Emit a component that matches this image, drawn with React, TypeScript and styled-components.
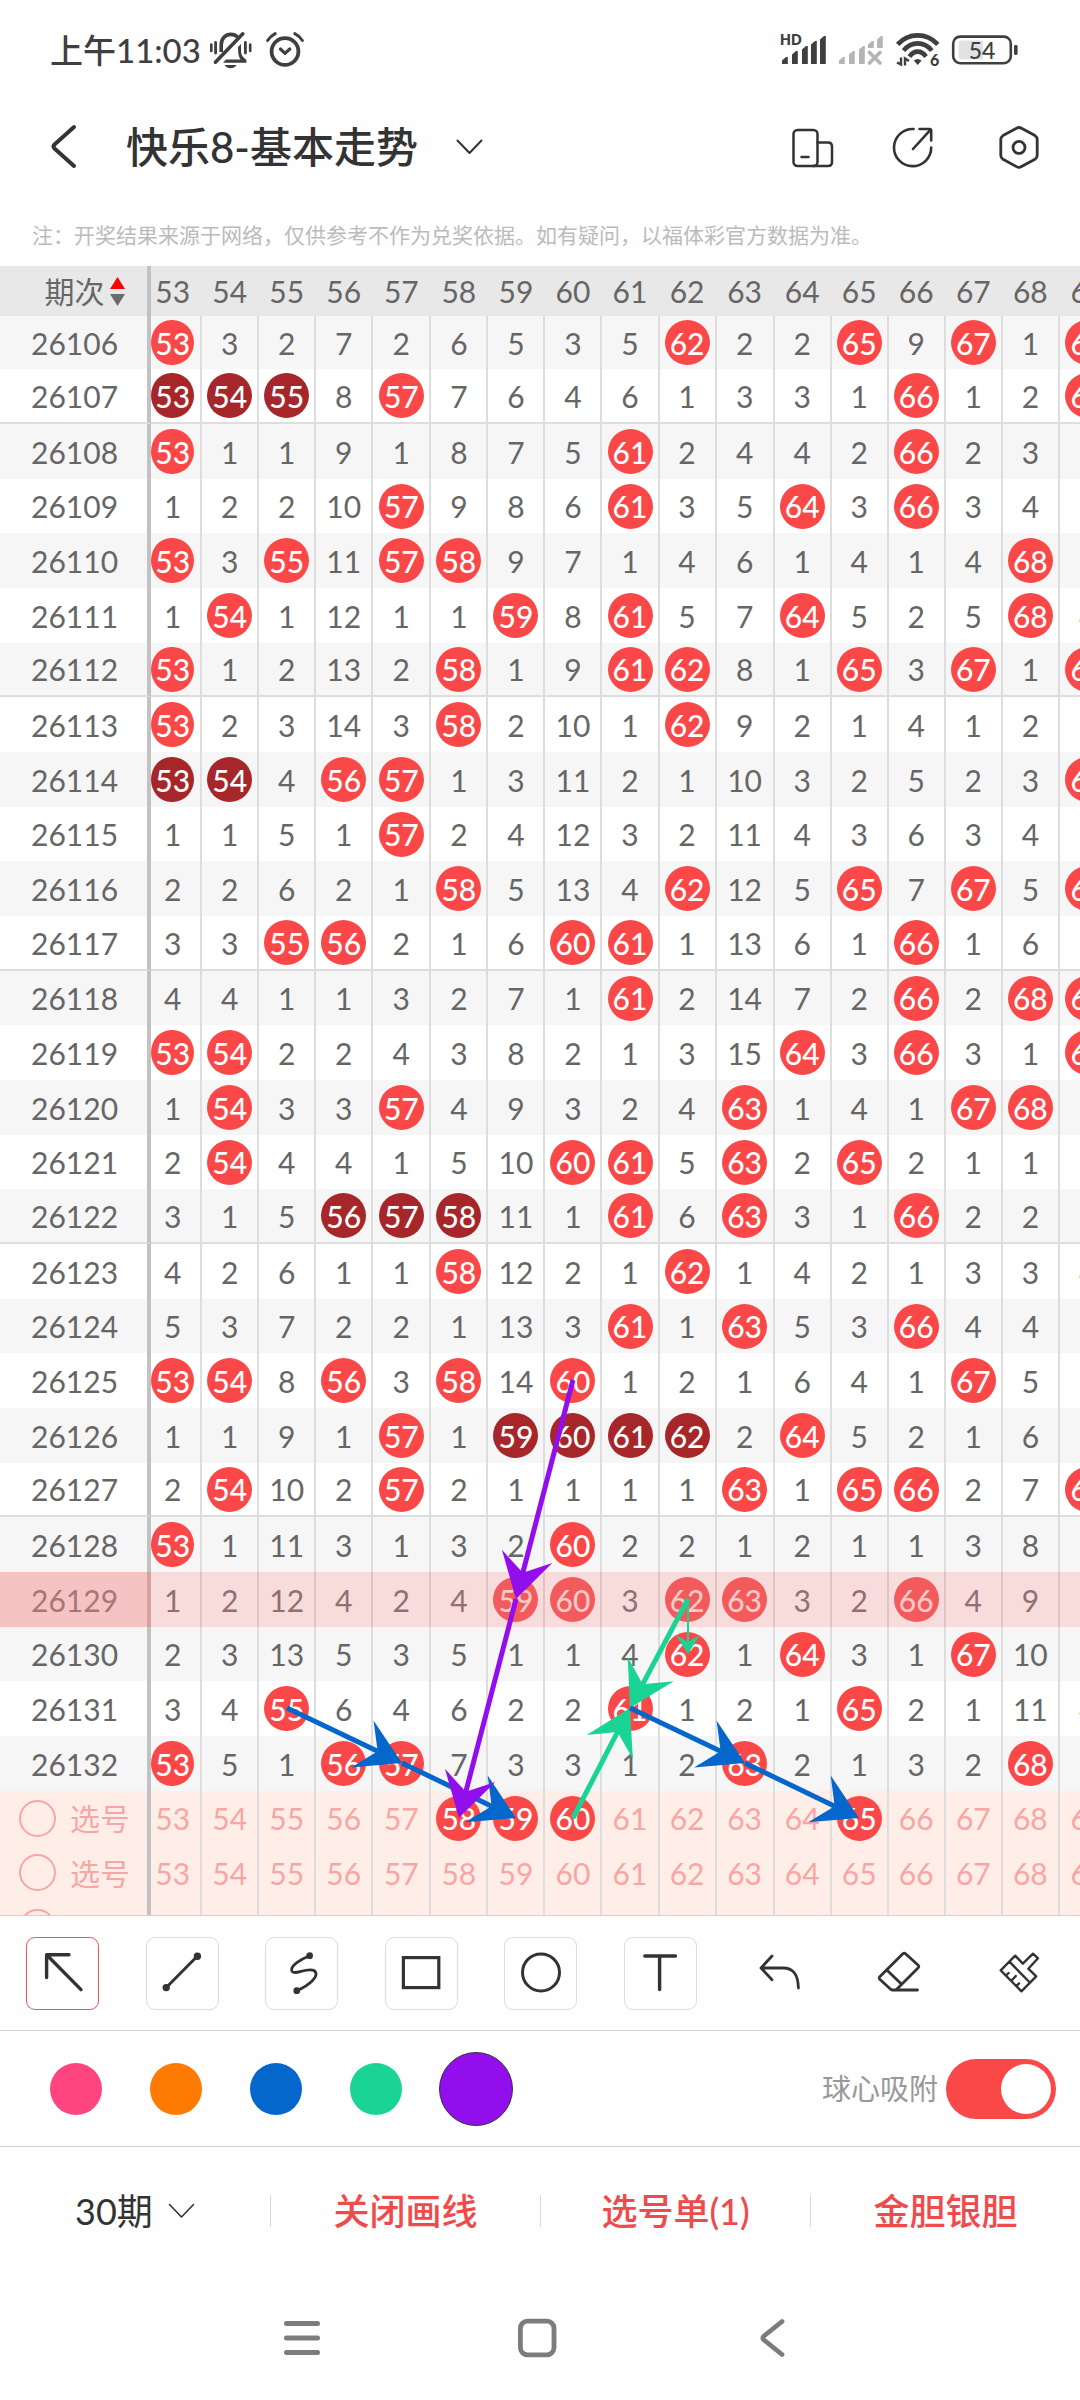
import React, { useState } from 'react';
import styled, { createGlobalStyle, css } from 'styled-components';

const FONT = `Lato, "Noto Sans CJK SC", "Noto Sans", sans-serif`;

const GlobalStyle = createGlobalStyle`
  *, *::before, *::after { box-sizing: border-box; }
  body { margin: 0; background: #fefefe; color: #333; font-family: ${FONT}; }
  button, select, input { font: inherit; color: inherit; margin: 0; padding: 0; border: 0; background: none; }
  button { cursor: pointer; }
  svg { display: block; flex: none; overflow: visible; }
`;

/* ---------- chart data ---------- */

const FIRST = 53;
const COLUMNS = Array.from({ length: 17 }, (_, i) => FIRST + i);

type Draw = { period: number; hits: number[]; streak?: number[] };

const DRAWS: Draw[] = [
  { period: 26106, hits: [53, 62, 65, 67, 69] },
  { period: 26107, hits: [53, 54, 55, 57, 66, 69], streak: [53, 54, 55] },
  { period: 26108, hits: [53, 61, 66] },
  { period: 26109, hits: [57, 61, 64, 66] },
  { period: 26110, hits: [53, 55, 57, 58, 68] },
  { period: 26111, hits: [54, 59, 61, 64, 68] },
  { period: 26112, hits: [53, 58, 61, 62, 65, 67, 69] },
  { period: 26113, hits: [53, 58, 62] },
  { period: 26114, hits: [53, 54, 56, 57, 69], streak: [53, 54] },
  { period: 26115, hits: [57] },
  { period: 26116, hits: [58, 62, 65, 67, 69] },
  { period: 26117, hits: [55, 56, 60, 61, 66] },
  { period: 26118, hits: [61, 66, 68, 69] },
  { period: 26119, hits: [53, 54, 64, 66, 69] },
  { period: 26120, hits: [54, 57, 63, 67, 68] },
  { period: 26121, hits: [54, 60, 61, 63, 65] },
  { period: 26122, hits: [56, 57, 58, 61, 63, 66], streak: [56, 57, 58] },
  { period: 26123, hits: [58, 62] },
  { period: 26124, hits: [61, 63, 66] },
  { period: 26125, hits: [53, 54, 56, 58, 60, 67] },
  { period: 26126, hits: [57, 59, 60, 61, 62, 64], streak: [59, 60, 61, 62] },
  { period: 26127, hits: [54, 57, 63, 65, 66, 69] },
  { period: 26128, hits: [53, 60] },
  { period: 26129, hits: [59, 60, 62, 63, 66] },
  { period: 26130, hits: [62, 64, 67] },
  { period: 26131, hits: [55, 61, 65] },
  { period: 26132, hits: [53, 56, 57, 63, 68] },
];

const SELECTED_PERIOD = 26129;

/* Misses already accumulated before the first listed draw. */
const CARRIED = [0, 2, 1, 6, 1, 5, 4, 2, 4, 0, 1, 1, 0, 8, 0, 0, 0];

const MISSES: number[][] = (() => {
  const running = [...CARRIED];
  return DRAWS.map((draw) =>
    COLUMNS.map((n, i) => {
      running[i] = draw.hits.includes(n) ? 0 : running[i] + 1;
      return running[i];
    }),
  );
})();

/* ---------- chart geometry shared by the table and the line layer ---------- */

const HEAD_H = 50;
const FIRST_ROW_H = 53;
const TICKET = DRAWS.length;

const colX = (n: number) => 173 + Math.round(((n - FIRST) * 343) / 6);
const rowY = (i: number) =>
  HEAD_H + FIRST_ROW_H + 55 * (i - 1) - Math.floor((i - 1) / 3) + 27;
const periodRow = (p: number) => p - DRAWS[0].period;

const GREEN = '#19d494';
const BLUE = '#0566cb';
const PURPLE = '#920eec';

type Line = { color: string; from: [number, number]; to: [number, number]; thin?: boolean };

const LINES: Line[] = [
  { color: GREEN, from: [62, periodRow(26129)], to: [62, periodRow(26130)], thin: true },
  { color: GREEN, from: [62, periodRow(26129)], to: [61, periodRow(26131)] },
  { color: GREEN, from: [60, TICKET], to: [61, periodRow(26131)] },
  { color: BLUE, from: [61, periodRow(26131)], to: [63, periodRow(26132)] },
  { color: BLUE, from: [63, periodRow(26132)], to: [65, TICKET] },
  { color: BLUE, from: [55, periodRow(26131)], to: [57, periodRow(26132)] },
  { color: BLUE, from: [57, periodRow(26132)], to: [59, TICKET] },
  { color: PURPLE, from: [60, periodRow(26125)], to: [59, periodRow(26129)] },
  { color: PURPLE, from: [59, periodRow(26129)], to: [58, TICKET] },
];

/* ---------- layout ---------- */

const Page = styled.div`
  display: flex;
  flex-direction: column;
  height: 100vh;
  overflow: hidden;
`;

const StatusBar = styled.div`
  flex: none;
  display: flex;
  align-items: center;
  justify-content: space-between;
  height: 98px;
  padding: 2px 62px 0 50px;
  color: #3f3f3f;
`;

const StatusGroup = styled.div<{ $gap: number }>`
  display: flex;
  align-items: center;
  gap: ${(p) => p.$gap}px;
`;

const Clock = styled.time`
  font-size: 33px;
  line-height: 40px;
  font-weight: 500;
  margin-right: -4px;
`;

const Header = styled.header`
  flex: none;
  display: flex;
  align-items: center;
  height: 98px;
  padding: 0 37px 0 40px;
`;

const IconButton = styled.button`
  display: flex;
`;

const Title = styled.h1`
  flex: 1;
  margin: 0 0 0 38px;
  font-size: 42px;
  line-height: 56px;
  font-weight: 500;
`;

const TitleButton = styled.button`
  display: flex;
  align-items: center;
  gap: 38px;
`;

const HeaderActions = styled.div`
  display: flex;
  gap: 54px;
`;

const Notice = styled.p`
  flex: none;
  margin: 0;
  height: 70px;
  padding: 23px 32px 0;
  font-size: 21px;
  line-height: 32px;
  color: #bbb;
  white-space: nowrap;
`;

const ChartViewport = styled.main`
  position: relative;
  flex: 1;
  min-height: 0;
  overflow: hidden;
`;

const ChartTable = styled.table`
  table-layout: fixed;
  width: 1118px;
  border-collapse: separate;
  border-spacing: 0;
  font-size: 30px;
  line-height: 36px;
  color: #666;
`;

const Col = styled.col<{ $w: number }>`
  width: ${(p) => p.$w}px;
`;

const headCell = css`
  height: ${HEAD_H}px;
  padding: 0;
  background: #e8e8e8;
  font-weight: 400;
  text-align: center;
`;

const HeadPeriod = styled.th`
  ${headCell}
  border-right: 4px solid #c2c2c2;
`;

const HeadNumber = styled.th`
  ${headCell}
  border-right: 2px solid #e8e8e8;
  &:nth-child(2) { padding-right: 6px; }
`;

const SortButton = styled.button`
  display: flex;
  align-items: center;
  justify-content: center;
  gap: 5px;
  width: 100%;
  padding-left: 22px;
`;

const PeriodCell = styled.th`
  padding: 0 0 0 2px;
  font-weight: 400;
  text-align: center;
  border-right: 4px solid #c2c2c2;
`;

const NumberCell = styled.td`
  padding: 0;
  text-align: center;
  border-right: 2px solid #ddd;
  &:nth-child(2) { padding-right: 6px; }
`;

const Ball = styled.span<{ $dark?: boolean }>`
  display: flex;
  align-items: center;
  justify-content: center;
  width: 45px;
  height: 45px;
  margin: 0 auto;
  border-radius: 50%;
  font-weight: 500;
  color: #fff;
  background: ${(p) => (p.$dark ? '#a62629' : '#fa4848')};
  ${NumberCell}:nth-child(2) & { width: 43px; border-radius: 20px 50% 50% 20px / 50%; }
`;

const rowHeights = css`
  height: 55px;
  &:nth-child(3n + 1) { height: 54px; }
  &:first-child { height: ${FIRST_ROW_H}px; }
`;

const DrawRow = styled.tr<{ $ruled: boolean; $selected: boolean }>`
  ${rowHeights}
  background: #fff;
  &:nth-child(odd) { background: #f6f6f6; }

  ${(p) => p.$ruled && css`
    > * { border-bottom: 2px solid #ddd; }
  `}

  ${(p) => p.$selected && css`
    && { background: #f8dbdb; }
    ${PeriodCell} { background: #f5c3c3; color: #a87677; border-right-color: #d9a2a2; }
    ${NumberCell} { color: #907072; border-right-color: #dfc3c3; }
    ${Ball} { background: #f35a5b; color: #fcc9c9; }
  `}
`;

const TicketRow = styled.tr`
  ${rowHeights}
  background: #feeee7;
  color: #f8a6a5;
`;

const TicketLabel = styled.label`
  display: flex;
  align-items: center;
  gap: 14px;
  padding-left: 17px;
`;

const TicketCheck = styled.input`
  appearance: none;
  width: 37px;
  height: 37px;
  border: 2px solid #f8a6a5;
  border-radius: 50%;
`;

const NumberButton = styled.button`
  display: block;
  width: 100%;
`;

const LineLayer = styled.svg`
  position: absolute;
  top: 0;
  left: 0;
  width: 100%;
  height: 100%;
  pointer-events: none;
`;

const Toolbar = styled.div`
  flex: none;
  display: flex;
  align-items: center;
  justify-content: space-between;
  height: 115px;
  padding: 0 25px 0 26px;
  border-top: 1px solid #d2d2d2;
`;

const ToolButton = styled.button<{ $framed?: boolean; $active?: boolean }>`
  display: flex;
  align-items: center;
  justify-content: center;
  width: 73px;
  height: 73px;
  border-radius: 9px;
  border: 1px solid ${(p) => (p.$active ? '#e4585a' : p.$framed ? '#dcdcdc' : 'transparent')};
`;

const Palette = styled.div`
  flex: none;
  display: flex;
  align-items: center;
  justify-content: space-between;
  height: 116px;
  padding: 0 24px 0 26px;
  border-top: 1px solid #d2d2d2;
`;

const Swatches = styled.div`
  display: flex;
`;

const SwatchSlot = styled.div`
  display: flex;
  align-items: center;
  justify-content: center;
  width: 100px;
  height: 74px;
`;

const Swatch = styled.button<{ $color: string; $active: boolean }>`
  width: ${(p) => (p.$active ? 74 : 52)}px;
  height: ${(p) => (p.$active ? 74 : 52)}px;
  border-radius: 50%;
  background: ${(p) => p.$color};
  border: ${(p) => (p.$active ? '1px solid #333' : '0')};
`;

const SnapLabel = styled.label`
  display: flex;
  align-items: center;
  gap: 8px;
  font-size: 29px;
  line-height: 36px;
  color: #999;
`;

const Switch = styled.input`
  appearance: none;
  display: flex;
  align-items: center;
  width: 110px;
  height: 60px;
  padding: 0 5px;
  border-radius: 30px;
  background: #ccc;
  cursor: pointer;
  &::before {
    content: '';
    width: 50px;
    height: 50px;
    border-radius: 50%;
    background: #fff;
  }
  &:checked { background: #fa4848; justify-content: flex-end; }
`;

const Footer = styled.div`
  flex: none;
  display: grid;
  grid-template-columns: repeat(4, 1fr);
  align-items: center;
  height: 128px;
  border-top: 1px solid #d2d2d2;
  font-size: 36px;
  line-height: 48px;
`;

const FooterCell = styled.div`
  display: flex;
  align-items: center;
  justify-content: center;
  gap: 15px;
  height: 32px;
  & + & { border-left: 1px solid #d8d8d8; }
`;

const PeriodSelect = styled.select`
  appearance: none;
  cursor: pointer;
`;

const FooterButton = styled.button`
  color: #f04a4b;
  font-weight: 500;
`;

const NavBar = styled.nav`
  flex: none;
  display: flex;
  align-items: center;
  justify-content: center;
  gap: 187px;
  height: 126px;
  padding: 2px 6px 0 0;
  color: #7c7c7c;
`;

/* ---------- icons ---------- */

const Icon = ({ w = 3, children }: { w?: number; children: React.ReactNode }) => (
  <svg width="48" height="48" viewBox="0 0 48 48" fill="none" stroke="currentColor" strokeWidth={w} strokeLinecap="round" strokeLinejoin="round" aria-hidden="true">
    {children}
  </svg>
);

const Chevron = ({ w }: { w: number }) => (
  <svg width="27" height="16" viewBox="0 0 27 16" fill="none" stroke="currentColor" strokeWidth={w} strokeLinecap="round" strokeLinejoin="round" aria-hidden="true">
    <path d="M1.5 1.5L13.5 14L25.5 1.5" />
  </svg>
);

const MutedBell = () => (
  <svg width="44" height="38" viewBox="0 0 44 38" fill="none" stroke="currentColor" strokeWidth="3.6" aria-hidden="true">
    <path d="M2.3 13.5V20M41.2 13.5V20" strokeWidth="2.6" strokeLinecap="round" />
    <path d="M6.6 11.5V22M36.4 11.5V22" strokeWidth="2.8" strokeLinecap="round" />
    <path d="M12.2 21V14C12.2 7.5 16.5 3.4 21.8 3.4C24.3 3.4 26.8 4.3 28.5 6" />
    <path d="M6.4 31.2L33.8 2.8" strokeLinecap="round" />
    <path d="M32 13V19.5C32 23 33 25.5 37.4 29V31.8H14L17 28.5H31.5C29.5 26 29 22 29 16Z" fill="currentColor" stroke="none" />
    <path d="M15.5 34H27.6C26.5 36 24.5 37.2 21.6 37.2C18.6 37.2 16.6 36 15.5 34Z" fill="currentColor" stroke="none" />
  </svg>
);

const Alarm = () => (
  <svg width="40" height="38" viewBox="0 0 40 38" fill="none" stroke="currentColor" strokeWidth="3.8" strokeLinecap="round" aria-hidden="true">
    <circle cx="20" cy="20.5" r="13.4" />
    <path d="M15.4 18L20 22.4L24.8 18" strokeLinejoin="round" strokeWidth="3.2" />
    <path d="M2.6 9.5Q5.5 5 10.2 2.6M37.4 9.5Q34.5 5 29.8 2.6" strokeWidth="3" />
  </svg>
);

const SIGNAL_BARS = [
  [3, 24],
  [13, 18],
  [23, 13],
  [32, 8],
  [41, 3],
];

const barPath = (x: number, y: number, bottom: number) =>
  `M${x} ${y + 3.5}L${x + 4} ${y}H${x + 5.8}V${bottom}H${x}Z`;

const SignalHD = () => (
  <svg width="48" height="34" viewBox="0 0 48 34" fill="currentColor" aria-hidden="true">
    {SIGNAL_BARS.map(([x, y]) => <path key={x} d={barPath(x, y, 31)} />)}
    <text x="1" y="12" fontSize="14" fontWeight="800">HD</text>
  </svg>
);

const SignalOff = () => (
  <svg width="46" height="34" viewBox="2 0 46 34" fill="#b5b5b5" aria-hidden="true">
    {SIGNAL_BARS.map(([x, y], i) => <path key={x} d={barPath(x, y, i < 3 ? 31 : 15)} />)}
    <path d="M33.5 19.5L44 30M44 19.5L33.5 30" stroke="#b5b5b5" strokeWidth="3.6" strokeLinecap="round" />
  </svg>
);

const Wifi = () => (
  <svg width="46" height="36" viewBox="0 0 46 36" fill="none" stroke="currentColor" strokeWidth="4.6" aria-hidden="true">
    <path d="M2.6 12.4Q11 3.4 22.7 3.4T42.8 12.4" />
    <path d="M8.6 18.6Q14.6 11.4 22.7 11.4T36.8 18.6" />
    <path d="M14.4 24.6Q18 19.6 22.7 19.6T31 24.6" />
    <path d="M18.8 28.4Q22.7 25.4 26.6 28.4L22.7 33Z" fill="currentColor" stroke="none" />
    <path d="M2 30.5L6 32.5V25.5M10 33.5V26.5L14 29" strokeWidth="2.4" />
    <text x="35" y="34" fontSize="16" fontWeight="900" fill="currentColor" stroke="none">6</text>
  </svg>
);

const Battery = () => (
  <svg width="66" height="30" viewBox="0 0 66 30" fill="none" aria-hidden="true">
    <rect x="1.2" y="1.6" width="57.6" height="26.6" rx="7" stroke="currentColor" strokeWidth="2.6" />
    <path d="M10 5.5H31V24.5H10Q6.5 24.5 6.5 21V9Q6.5 5.5 10 5.5Z" fill="#e2e2e2" />
    <rect x="62" y="10" width="3.6" height="10" rx="1.4" fill="currentColor" />
    <text x="30" y="23.5" fontSize="23" fontWeight="500" textAnchor="middle" fill="currentColor">54</text>
  </svg>
);

const TOOLS = [
  { name: '箭头', framed: true, w: 3.4, art: <path d="M42 40.6L7.8 6M30 5.8H7.6V28.5" /> },
  {
    name: '直线', framed: true, w: 3,
    art: <><path d="M7.8 39L39.5 7" /><circle cx="8.2" cy="38.6" r="2.2" fill="currentColor" /><circle cx="39.4" cy="7.2" r="2.2" fill="currentColor" /></>,
  },
  {
    name: '曲线', framed: true, w: 2.8,
    art: <><path d="M31.6 6.7C22 10.5 12 17 13.8 22C16 27 28 18.5 36 21.5C43 26.500 31 36.500 18.8 41.7" /><circle cx="31.6" cy="6.7" r="2" fill="currentColor" /><circle cx="18.8" cy="41.7" r="2" fill="currentColor" /></>,
  },
  { name: '矩形', framed: true, w: 3.2, art: <rect x="6.4" y="8.6" width="35.4" height="30" strokeLinejoin="miter" /> },
  { name: '圆形', framed: true, w: 3, art: <circle cx="24" cy="23.4" r="18.5" /> },
  { name: '文字', framed: true, w: 3.4, art: <path d="M8.8 7H39.5M23.6 7V40.5" /> },
  { name: '撤销', w: 2.8, art: <path d="M16 7L5 19L16 30.7M5 19H27C38 19 42 26 42.4 39" /> },
  {
    name: '橡皮', w: 2.8,
    art: <path d="M27.6 5Q29.2 3.6 30.8 5L43 16Q44.6 17.5 43 19L22 40Q21 41 19.5 41H17.5Q16.3 41 15.4 40L5 30.5Q3.4 29 5 27.4ZM12.3 21.5L26.4 35M17 41H42.5" />,
  },
  {
    name: '清除', w: 2.4,
    art: <path d="M20.2 6.7L5.7 21.3L26.4 42.3L41.2 27.3L33.3 19.7L43 9.3L38 4.7L27.8 14.7ZM14.4 12.7L34.3 33M11 26.6L13.6 24M16.2 31.8L20.8 27M21.4 37L24 34.4" />,
  },
];

const SWATCHES = [
  { name: '粉色', color: '#ff457f' },
  { name: '橙色', color: '#ff7a00' },
  { name: '蓝色', color: BLUE },
  { name: '绿色', color: GREEN },
  { name: '紫色', color: PURPLE },
];

/* A line with a barbed head whose tip rests on the centre of the target ball. */
const ArrowLine = ({ color, from, to, thin }: Line) => {
  const [x1, y1] = [colX(from[0]), rowY(from[1])];
  const [x2, y2] = [colX(to[0]), rowY(to[1])];
  const len = Math.hypot(x2 - x1, y2 - y1);
  const [ux, uy] = [(x2 - x1) / len, (y2 - y1) / len];
  const [back, half, notch] = thin ? [19, 12, 12] : [44, 26, 27];
  const at = (b: number, s: number) => `${x2 - ux * b - uy * s},${y2 - uy * b + ux * s}`;
  return (
    <g>
      <line x1={x1} y1={y1} x2={x2 - ux * notch} y2={y2 - uy * notch} stroke={color} strokeWidth={thin ? 2 : 5} />
      <polygon points={[at(0, 0), at(back, half), at(notch, 0), at(back, -half)].join(' ')} fill={color} />
    </g>
  );
};

/* ---------- chart ---------- */

const TrendChart = () => {
  const [picked, setPicked] = useState<number[]>([58, 59, 60, 65]);
  const toggle = (n: number) =>
    setPicked((list) => (list.includes(n) ? list.filter((v) => v !== n) : [...list, n]));

  return (
    <ChartViewport>
      <ChartTable>
        <colgroup>
          <Col $w={151} />
          <Col $w={51} />
          {COLUMNS.slice(1).map((n, i) => <Col key={n} $w={i % 6 === 3 ? 58 : 57} />)}
        </colgroup>
        <thead>
          <tr>
            <HeadPeriod scope="col">
              <SortButton>
                期次
                <svg width="15" height="29" viewBox="0 0 15 29" aria-hidden="true">
                  <path d="M7.5 0L15 12H0Z" fill="#fe0000" />
                  <path d="M0 17H15L7.5 29Z" fill="#6b6b6b" />
                </svg>
              </SortButton>
            </HeadPeriod>
            {COLUMNS.map((n) => <HeadNumber key={n} scope="col">{n}</HeadNumber>)}
          </tr>
        </thead>
        <tbody>
          {DRAWS.map((draw, r) => (
            <DrawRow key={draw.period} $ruled={draw.period % 5 === 2 && draw.period !== 26132} $selected={draw.period === SELECTED_PERIOD}>
              <PeriodCell scope="row">{draw.period}</PeriodCell>
              {COLUMNS.map((n, c) => (
                <NumberCell key={n}>
                  {draw.hits.includes(n) ? <Ball $dark={draw.streak?.includes(n)}>{n}</Ball> : MISSES[r][c]}
                </NumberCell>
              ))}
            </DrawRow>
          ))}
          {[1, 2, 3].map((ticket) => (
            <TicketRow key={ticket}>
              <PeriodCell scope="row">
                <TicketLabel>
                  <TicketCheck type="checkbox" />
                  选号
                </TicketLabel>
              </PeriodCell>
              {COLUMNS.map((n) => (
                <NumberCell key={n}>
                  <NumberButton onClick={() => ticket === 1 && toggle(n)}>
                    {ticket === 1 && picked.includes(n) ? <Ball>{n}</Ball> : n}
                  </NumberButton>
                </NumberCell>
              ))}
            </TicketRow>
          ))}
        </tbody>
      </ChartTable>
      <LineLayer aria-hidden="true">
        {LINES.map((line, i) => <ArrowLine key={i} {...line} />)}
      </LineLayer>
    </ChartViewport>
  );
};

/* ---------- page ---------- */

export default function App() {
  const [tool, setTool] = useState('箭头');
  const [color, setColor] = useState(PURPLE);
  const [snap, setSnap] = useState(true);

  return (
    <Page>
      <GlobalStyle />
      <StatusBar>
        <StatusGroup $gap={12}>
          <Clock>上午11:03</Clock>
          <MutedBell />
          <Alarm />
        </StatusGroup>
        <StatusGroup $gap={11}>
          <SignalHD />
          <SignalOff />
          <Wifi />
          <Battery />
        </StatusGroup>
      </StatusBar>

      <Header>
        <IconButton aria-label="返回">
          <Icon w={4}><path d="M34 4L14.5 21.5Q12.5 23.5 14.5 25.5L34 43" /></Icon>
        </IconButton>
        <Title>
          <TitleButton>
            快乐8-基本走势
            <Chevron w={2} />
          </TitleButton>
        </Title>
        <HeaderActions>
          <IconButton aria-label="横竖屏">
            <Icon w={2.5}>
              <rect x="2.5" y="7" width="24" height="36" rx="4" />
              <path d="M26.5 19.5H37Q41 19.5 41 23.5V39Q41 43 37 43H22M10.5 34H17.5" />
            </Icon>
          </IconButton>
          <IconButton aria-label="分享">
            <Icon w={2.6}>
              <path d="M20.6 6A18.6 18.6 0 1 0 38.2 24.5M20 26L37.6 6.6M26.5 6H36.5Q38.2 6 38.2 7.7V17.5" />
            </Icon>
          </IconButton>
          <IconButton aria-label="设置">
            <Icon w={2.8}>
              <path d="M21.5 5.2Q24 3.8 26.5 5.2L40 12.6Q42.2 14 42.2 16.5V32.5Q42.2 35 40 36.3L26.5 43.6Q24 45 21.5 43.6L8 36.3Q5.8 35 5.8 32.5V16.5Q5.8 14 8 12.6Z" />
              <circle cx="24" cy="24.4" r="6" />
            </Icon>
          </IconButton>
        </HeaderActions>
      </Header>

      <Notice>注：开奖结果来源于网络，仅供参考不作为兑奖依据。如有疑问，以福体彩官方数据为准。</Notice>

      <TrendChart />

      <Toolbar>
        {TOOLS.map((t) => (
          <ToolButton key={t.name} aria-label={t.name} $framed={t.framed} $active={tool === t.name} onClick={() => t.framed && setTool(t.name)}>
            <Icon w={t.w}>{t.art}</Icon>
          </ToolButton>
        ))}
      </Toolbar>

      <Palette>
        <Swatches>
          {SWATCHES.map((s) => (
            <SwatchSlot key={s.name}>
              <Swatch aria-label={s.name} $color={s.color} $active={color === s.color} onClick={() => setColor(s.color)} />
            </SwatchSlot>
          ))}
        </Swatches>
        <SnapLabel>
          球心吸附
          <Switch type="checkbox" role="switch" checked={snap} onChange={(e) => setSnap(e.target.checked)} />
        </SnapLabel>
      </Palette>

      <Footer>
        <FooterCell>
          <PeriodSelect aria-label="期数">
            <option>30期</option>
          </PeriodSelect>
          <Chevron w={1.6} />
        </FooterCell>
        <FooterCell><FooterButton>关闭画线</FooterButton></FooterCell>
        <FooterCell><FooterButton>选号单(1)</FooterButton></FooterCell>
        <FooterCell><FooterButton>金胆银胆</FooterButton></FooterCell>
      </Footer>

      <NavBar>
        <IconButton aria-label="菜单">
          <Icon w={5}><path d="M8.5 9.5H39.5M8.5 24H39.5M8.5 38.5H39.5" /></Icon>
        </IconButton>
        <IconButton aria-label="主页">
          <Icon w={4.8}><rect x="7.4" y="7.2" width="33.6" height="33.6" rx="7" /></Icon>
        </IconButton>
        <IconButton aria-label="后退">
          <Icon w={4.8}><path d="M34 7.5L16 22Q13.6 24 16 26L34 40.5" /></Icon>
        </IconButton>
      </NavBar>
    </Page>
  );
}
